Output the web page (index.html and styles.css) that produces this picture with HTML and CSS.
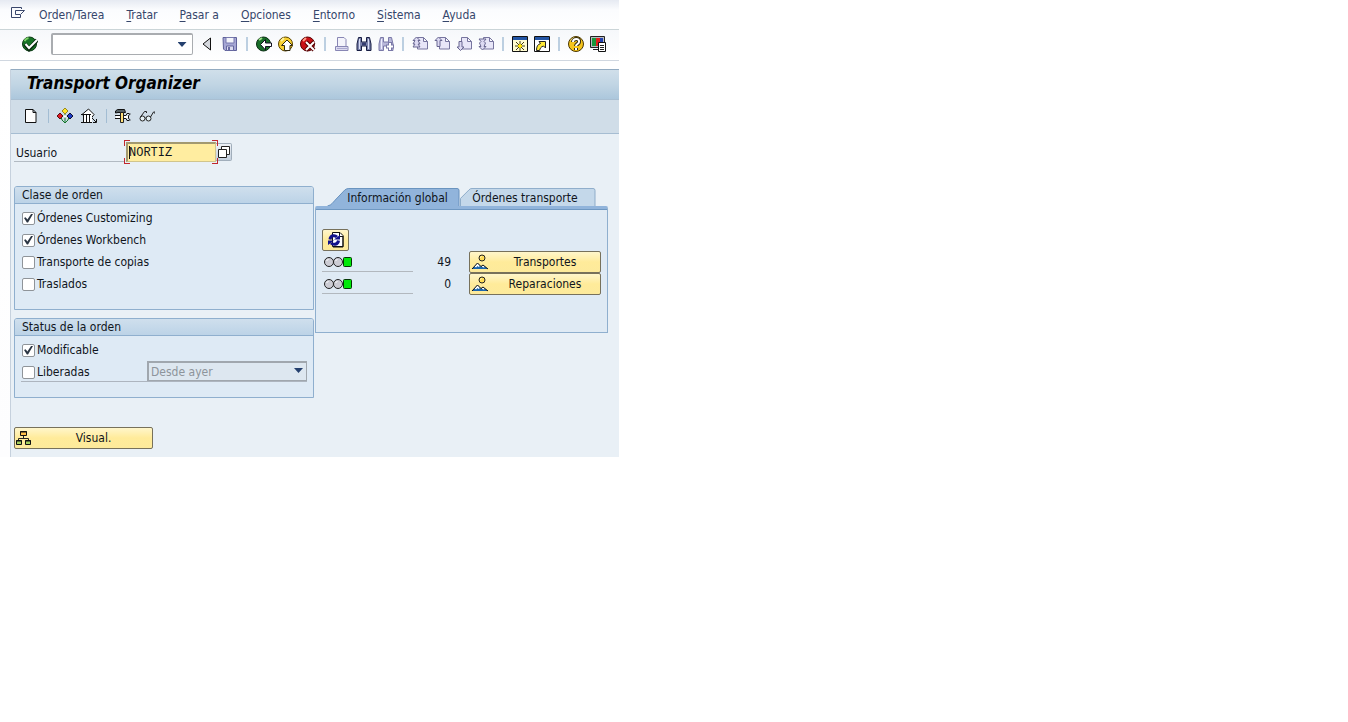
FILE: index.html
```html
<!DOCTYPE html>
<html lang="es">
<head>
<meta charset="utf-8">
<title>Transport Organizer</title>
<link rel="stylesheet" href="styles.css">
</head>
<body>
<svg class="defs" aria-hidden="true">
  <defs>
    <symbol id="doc-small" viewBox="0 0 16 16">
      <path d="M5.500 1.500h6l4 4v7.500h-10zM11.500 1.500v4h4" fill="#e8e6f8" stroke="#77759f"/>
    </symbol>
    <symbol id="lights" viewBox="0 0 28 12">
      <circle cx="5" cy="6" r="4.500" fill="#ccccd4" stroke="#222"/>
      <circle cx="14" cy="6" r="4.500" fill="#ccccd4" stroke="#222"/>
      <rect x="19.500" y="1.500" width="8" height="9" rx="1" fill="#00e808" stroke="#053505"/>
      <path d="M2.500 5l2-2M11.500 5l2-2" stroke="#fff"/>
    </symbol>
    <symbol id="scene" viewBox="0 0 18 16">
      <path d="M1 15l5.500-6L10 12.500 12 11l5 4z" fill="#1c66ae"/>
      <path d="M3.500 12.500L6.500 9l2.500 3-1.500 1-1-1-1.500 1.500zM10.500 12.500L12 11l2 2-1.500.500z" fill="#fff"/>
      <path d="M1 15l5.500-6L10 12.500 12 11l5 4" fill="none" stroke="#111"/>
      <circle cx="11" cy="4" r="3" fill="#ffdc55" stroke="#222"/>
      <path d="M9.500 3.500l1-1" stroke="#fff"/>
    </symbol>
  </defs>
</svg>
<div class="app">
  <nav class="menubar">
    <button class="menu-icon" aria-label="Menú">
      <svg width="16" height="14" viewBox="0 0 16 14" fill="none" stroke="#39466b"><path d="M11.500 3V1.500h-10v10h9V9M5.500 4.500v4M5.500 4.500h9L10.500 8.500h-5"/></svg>
    </button>
    <button>O<u>r</u>den/Tarea</button>
    <button><u>T</u>ratar</button>
    <button><u>P</u>asar a</button>
    <button><u>O</u>pciones</button>
    <button><u>E</u>ntorno</button>
    <button><u>S</u>istema</button>
    <button><u>A</u>yuda</button>
  </nav>

  <div class="toolbar">
    <button class="icon" aria-label="Continuar"><svg viewBox="0 0 16 16"><circle cx="7.500" cy="8" r="7" fill="#177326" stroke="#0a3a12"/><path d="M2.500 5a6 6 0 0 1 4-3" stroke="#7ed36a" stroke-width="2" fill="none"/><path d="M3 8l4 5 8-9" stroke="#0a2a10" stroke-width="4" fill="none"/><path d="M3.500 8l3.500 4 8-8" stroke="#fff" stroke-width="2" fill="none"/></svg></button>
    <span class="command"><input type="text" aria-label="Comando"><button class="drop" aria-label="Historial"></button></span>
    <button class="icon" aria-label="Atrás"><svg viewBox="0 0 16 16"><path d="M10.500 2v12L3 8z" fill="#d5d8de" stroke="#111"/></svg></button>
    <button class="icon" aria-label="Grabar"><svg viewBox="0 0 16 16"><path d="M1 1.500h13.500v13H3L1.500 13z" fill="#a5a6d4" stroke="#5f619a"/><path d="M4 1.500h8V7H4z" fill="#f3f4fb" stroke="#7779ae"/><path d="M4.500 10h7v4.500h-7z" fill="#dcdcf0" stroke="#6668a0"/><path d="M6 11h2v3H6z" fill="#696ba4"/></svg></button>
    <span class="sep"></span>
    <button class="icon" aria-label="Volver"><svg viewBox="0 0 16 16"><circle cx="7.500" cy="8" r="7" fill="#176d28" stroke="#092c12"/><path d="M3 4l3-2" stroke="#9de088" stroke-width="2"/><path d="M4.500 8.500l5-5V7h6v3.500h-6v3.500z" fill="#fff" stroke="#112"/></svg></button>
    <button class="icon" aria-label="Finalizar"><svg viewBox="0 0 16 16"><circle cx="7.500" cy="8" r="7" fill="#f8d030" stroke="#5a4300"/><path d="M3 5l3-3" stroke="#fff3a0" stroke-width="2"/><path d="M9 4l5.500 5.500H12v5H6.500v-5h-3z" fill="#fff" stroke="#332b10"/></svg></button>
    <button class="icon" aria-label="Cancelar"><svg viewBox="0 0 16 16"><circle cx="7.500" cy="8" r="7" fill="#ca1016" stroke="#500"/><path d="M3 5l3-3" stroke="#ff9b88" stroke-width="2"/><path d="M6 6l8 8M14 6l-8 8" stroke="#500" stroke-width="4"/><path d="M6 6l8 8M14 6l-8 8" stroke="#fff" stroke-width="2"/></svg></button>
    <span class="sep"></span>
    <button class="icon" aria-label="Imprimir"><svg viewBox="0 0 16 16"><path d="M3.500 10.500v-9H10l2 2v7" fill="#f3f3fb" stroke="#8886b4"/><path d="M1.500 10.500H14v4H1.500z" fill="#dcdaf0" stroke="#8886b4"/><path d="M3 12.500h10" stroke="#aaa8d0"/></svg></button>
    <button class="icon" aria-label="Buscar"><svg viewBox="0 0 16 16"><path d="M2.500 1.500h3V6h5V1.500h3L15 8v6.500h-4.500V10h-5v4.500H1V8z" fill="#7b83ad" stroke="#161c42"/><path d="M3.500 3v10M12.500 3v10" stroke="#d9def5"/><path d="M6 7h4v2H6z" fill="#343c70"/></svg></button>
    <button class="icon" aria-label="Seguir buscando"><svg viewBox="0 0 16 16"><path d="M2.500 1.500h3V6h5V1.500h3L15 8v6.500h-4.500V10h-5v4.500H1V8z" fill="#b9b8da" stroke="#7a79a8"/><path d="M3.500 3v10" stroke="#eef"/><path d="M12 6v9M8 10.500h8" stroke="#7a79a8" stroke-width="4"/><path d="M12 7v7M9 10.500h6" stroke="#fff" stroke-width="2"/></svg></button>
    <span class="sep"></span>
    <button class="icon" aria-label="Primera página"><svg viewBox="0 0 16 16"><use href="#doc-small"/><path d="M4.500 1L1 4.500h2L1 8h2l-2 3h7L6 8h2L6 4.500h2z" fill="#dddaf3" stroke="#696791"/></svg></button>
    <button class="icon" aria-label="Página anterior"><svg viewBox="0 0 16 16"><use href="#doc-small"/><path d="M4.500 1L1 4.500h2v6h3v-6h2z" fill="#dddaf3" stroke="#696791"/></svg></button>
    <button class="icon" aria-label="Página siguiente"><svg viewBox="0 0 16 16"><use href="#doc-small"/><path d="M4.500 14.500L1 11h2V5.500h3V11h2z" fill="#dddaf3" stroke="#696791"/></svg></button>
    <button class="icon" aria-label="Última página"><svg viewBox="0 0 16 16"><use href="#doc-small"/><path d="M4.500 14L1 10.500h2L1.500 7l1.500-1.500L1 3h7L6 5.500 7.500 7 6 10.500h2z" fill="#dddaf3" stroke="#696791"/></svg></button>
    <span class="sep"></span>
    <button class="icon" aria-label="Nuevo modo"><svg viewBox="0 0 16 16"><path d="M.500.500h15v15H.500z" fill="#fffbd0" stroke="#111"/><path d="M1 1h14v3H1z" fill="#2355a5"/><path d="M8 5v10M3 10h10M4 6l8 8M12 6l-8 8" stroke="#433c10"/><path d="M8 8v4M6 10h4" stroke="#ffe200" stroke-width="2"/></svg></button>
    <button class="icon" aria-label="Crear acceso directo"><svg viewBox="0 0 16 16"><path d="M.500.500h15v15H.500z" fill="#fff" stroke="#111"/><path d="M1 1h14v3H1z" fill="#2355a5"/><path d="M2.500 14.500c0-4 1-6 4-7L5 5.500h6.500V12l-2-2c-3 1-3 2-4 4.500z" fill="#ffe936" stroke="#222"/></svg></button>
    <span class="sep"></span>
    <button class="icon" aria-label="Ayuda"><svg viewBox="0 0 16 16"><circle cx="8" cy="8" r="7.500" fill="#f5c41c" stroke="#493600"/><path d="M3 5l3-3" stroke="#fff2a0" stroke-width="2"/><path d="M5 6c0-4 7-4 6 0 0 2-3 2-3 4M8 12v2" stroke="#332b10" stroke-width="4" fill="none"/><path d="M5 6c0-4 7-4 6 0 0 2-3 2-3 4M8 12v2" stroke="#fff" stroke-width="2" fill="none"/></svg></button>
    <button class="icon" aria-label="Ajustar layout local"><svg viewBox="0 0 16 16"><path d="M.500.500h14v11H.500zM3 13.500h6" fill="#b9bbc0" stroke="#222"/><path d="M2 2h4v8H2z" fill="#18983c"/><path d="M6 2h4v8H6z" fill="#e02020"/><path d="M10 2h3v5h-3z" fill="#2343b0"/><path d="M8.500 6.500h7v9h-7z" fill="#fff" stroke="#111"/><path d="M10 9.500h4M10 11.500h4M10 13.500h4" stroke="#222"/></svg></button>
  </div>

  <main class="workspace">
    <h1>Transport Organizer</h1>
    <div class="actions">
      <button class="icon" aria-label="Crear"><svg viewBox="0 0 16 16"><path d="M2.500 1.500H10l3 3v10H2.500zM10 1.500v3h3" fill="#fdfdfd" stroke="#111"/></svg></button>
      <span class="sep"></span>
      <button class="icon" aria-label="Liberar"><svg viewBox="0 0 16 16"><path d="M8 5v10M4 9l1 3 3 3 3-3 1-3" stroke="#12772a" fill="none"/><path d="M8 0l3 3-3 3-3-3z" fill="#ffe52a" stroke="#998a20"/><path d="M3 5l3 3-3 3-3-3z" fill="#df1824" stroke="#511"/><path d="M13 5l3 3-3 3-3-3z" fill="#1c3dc4" stroke="#113"/><path d="M6.500 8.500l1.500-2 1.500 2L8 10z" fill="#fff"/></svg></button>
      <button class="icon" aria-label="Transportar"><svg viewBox="0 0 16 16"><path d="M1 6.500L7.500 1 13 6.500l-3 4z" fill="#fff" stroke="#111"/><path d="M2 7h9v7H2z" fill="#fff"/><path d="M0 6.500h10M2.500 7v7M5.500 7v7M8.500 7v7M0 14.500h11" stroke="#111"/><path d="M11 10l4 4M15.500 11v3.500H12" stroke="#111" fill="none"/></svg></button>
      <span class="sep"></span>
      <button class="icon" aria-label="Herramientas"><svg viewBox="0 0 16 16"><path d="M.500 5V3L2.500 1.500h7l1 3H3z" fill="#566166" stroke="#111"/><path d="M5.500 4.500h3v10h-3z" fill="#ffe07a" stroke="#222"/><path d="M0 7.500h5M0 10.500h5M9 7.500h2l1-2h2.500M9 10.500h2l1 2h2.500M15.500 6l-2 1.500v3l2 1.500" stroke="#111" fill="none"/><path d="M9 9h4M1 9h4" stroke="#fff" stroke-width="2"/></svg></button>
      <button class="icon" aria-label="Visualizar"><svg viewBox="0 0 16 16" fill="none" stroke="#222"><circle cx="3.500" cy="10.500" r="2.500" fill="#e6f1f5"/><circle cx="9.500" cy="10.500" r="2.500" fill="#e6f1f5"/><path d="M1.500 9l4-5.500h2V5M11.500 9l3-5h1.500V6M6 9.500l1 1"/></svg></button>
    </div>

    <div class="content">
      <div class="user-row">
        <label for="user">Usuario</label>
        <span class="focus"><input id="user" type="text" value="NORTIZ"></span>
        <button class="match" aria-label="Ayuda para entradas"><svg width="12" height="12" viewBox="0 0 12 12"><path d="M3.500.500h8v8h-8z" fill="#fff" stroke="#222"/><path d="M.500 3.500h8v8h-8z" fill="#fff" stroke="#222"/></svg></button>
      </div>

      <div class="columns">
        <div class="left">
          <section class="group">
            <h2>Clase de orden</h2>
            <div class="rows tall">
              <label class="check"><input type="checkbox" checked>Órdenes Customizing</label>
              <label class="check"><input type="checkbox" checked>Órdenes Workbench</label>
              <label class="check"><input type="checkbox">Transporte de copias</label>
              <label class="check"><input type="checkbox">Traslados</label>
            </div>
          </section>
          <section class="group">
            <h2>Status de la orden</h2>
            <div class="rows">
              <label class="check"><input type="checkbox" checked>Modificable</label>
              <div class="released">
                <label class="check"><input type="checkbox">Liberadas</label>
                <span class="select"><select aria-label="Periodo" disabled><option>Desde ayer</option></select></span>
              </div>
            </div>
          </section>
        </div>

        <section class="tabs">
          <div class="tablist" role="tablist">
            <button class="tab active" role="tab" aria-selected="true"><svg viewBox="0 0 134 19" preserveAspectRatio="none"><path d="M.500 19C5 18 6 15 8 13L18 2Q20 .500 22 .500h109q2 0 2 2V19" fill="#91b4db" stroke="#6590bd"/></svg><span>Información global</span></button>
            <button class="tab" role="tab" aria-selected="false"><svg viewBox="0 0 136 19" preserveAspectRatio="none"><path d="M.500 19V11L9 2Q10 .500 12 .500h121q2 0 2 2V19" fill="#c4d8ea" stroke="#8cabc9"/></svg><span>Órdenes transporte</span></button>
          </div>
          <div class="panel" role="tabpanel">
            <button class="yellow refresh" aria-label="Actualizar"><svg width="18" height="16" viewBox="0 0 18 16"><path d="M5.500.500H13l3 3v11H5.500z" fill="#fff" stroke="#111"/><path d="M12.500 1v3.500H16M16 4v11H6" stroke="#111" fill="none"/><path d="M3 7.500C3.500 3 8 3 10 5M11.500 8.500C11 13 6 13 4 11" fill="none" stroke="#12128c" stroke-width="3"/><path d="M7 7.500h6V3zM7 8.500H1V13z" fill="#12128c"/></svg></button>
            <div class="stat"><span class="signal"><svg width="28" height="12"><use href="#lights"/></svg></span><span class="count">49</span><button class="yellow"><svg width="18" height="16"><use href="#scene"/></svg><span>Transportes</span></button></div>
            <div class="stat"><span class="signal"><svg width="28" height="12"><use href="#lights"/></svg></span><span class="count">0</span><button class="yellow"><svg width="18" height="16"><use href="#scene"/></svg><span>Reparaciones</span></button></div>
          </div>
        </section>
      </div>

      <button class="yellow visual"><svg width="16" height="16" viewBox="0 0 16 16"><path d="M7.500 5v3M2.500 11V8.500h10V11" stroke="#222" fill="none"/><path d="M4.500 1.500h6v4h-6z" fill="#ffc04a" stroke="#111"/><path d="M.500 10.500h5v4h-5zM9.500 10.500h5v4h-5z" fill="#a4d05e" stroke="#111"/><path d="M4 2h7M0 11h6M9 11h6" stroke="#111"/></svg><span>Visual.</span></button>
    </div>
  </main>
</div>
</body>
</html>
```
FILE: styles.css
```css
* { box-sizing: border-box; }

body {
  margin: 0;
  background: #fff;
  color: #10151c;
  font: 12px/16px "DejaVu Sans Condensed", "DejaVu Sans", sans-serif;
  font-stretch: condensed;
}

button, input, select { font: inherit; color: inherit; margin: 0; }
button { padding: 0; border: 0; background: none; }
.defs { position: absolute; width: 0; height: 0; }
.app { max-width: 619px; background: linear-gradient(#fff 70px, #fdfdfe); }

.menubar {
  display: flex;
  align-items: center;
  gap: 22px;
  height: 30px;
  padding-left: 10px;
  background: linear-gradient(#e6eaf2, #fbfcfe 10px, #fff);
  border-bottom: 1px solid #cbd5d8;
  color: #36466b;
}
.menubar button { white-space: nowrap; }
.menubar .menu-icon { height: 18px; margin-right: -9px; }
.menubar u { text-underline-offset: 2px; }

.toolbar {
  display: flex;
  align-items: center;
  gap: 6px;
  height: 31px;
  padding: 0 12px 2px 22px;
  background: linear-gradient(#f6f8fb, #fff);
  border-bottom: 1px solid #d0d7e0;
}
.icon { flex: none; width: 16px; height: 16px; }
.icon svg { display: block; width: 16px; height: 16px; }
.sep { flex: none; width: 2px; height: 14px; margin: 0 2px; background: #bccfe1; }

.command {
  display: flex;
  width: 142px;
  height: 22px;
  margin: 0 1px 0 7px;
  border: 2px solid #a9acb0;
  border-right-width: 1px;
  border-bottom-width: 1px;
  border-radius: 2px;
  background: #fff;
}
.command input { flex: 1; min-width: 0; border: 0; padding: 0 4px; background: none; }
.drop { width: 20px; }
.drop::before, .select::after {
  content: "";
  display: block;
  width: 9px;
  height: 5px;
  margin: 0 auto;
  background: #24406e;
  clip-path: polygon(0 0, 100% 0, 50% 100%);
}

.workspace {
  margin: 8px 0 0 10px;
  border-left: 1px solid #c6d1dd;
  background: #e9f0f6;
}
h1 {
  margin: 0;
  height: 31px;
  padding-left: 16px;
  border-top: 1px solid #93abc1;
  border-bottom: 1px solid #a9bfd2;
  background: linear-gradient(#d0dfea, #c1d5e4 50%, #acc7dc);
  font: italic bold 17px/26px "DejaVu Sans Condensed", "DejaVu Sans", sans-serif;
  font-stretch: condensed;
  color: #000;
}
.actions {
  display: flex;
  align-items: center;
  gap: 8px;
  height: 34px;
  padding: 0 12px 2px;
  border-bottom: 1px solid #a6bdd2;
  background: #d0dde8;
}
.actions .sep { width: 1px; margin: 0 0 0 1px; background: #a3bdd3; }

.content { padding: 6px 11px 8px 3px; }
.user-row { display: flex; align-items: center; height: 24px; }
.user-row label {
  width: 111px;
  height: 20px;
  margin-right: 1px;
  padding: 3px 2px 0;
  border-bottom: 1px solid #b2bac2;
}
.focus {
  position: relative;
  width: 90px;
  height: 20px;
  background: #ffeda0;
}
.focus::before {
  content: "";
  position: absolute;
  inset: -2px;
  background:
    linear-gradient(#c1272d, #c1272d) 0 0 / 6px 1px,
    linear-gradient(#c1272d, #c1272d) 0 0 / 1px 6px,
    linear-gradient(#c1272d, #c1272d) 100% 0 / 6px 1px,
    linear-gradient(#c1272d, #c1272d) 100% 0 / 1px 6px,
    linear-gradient(#c1272d, #c1272d) 0 100% / 6px 1px,
    linear-gradient(#c1272d, #c1272d) 0 100% / 1px 6px,
    linear-gradient(#c1272d, #c1272d) 100% 100% / 6px 1px,
    linear-gradient(#c1272d, #c1272d) 100% 100% / 1px 6px;
  background-repeat: no-repeat;
}
.focus::after {
  content: "";
  position: absolute;
  left: 3px;
  top: 4px;
  width: 1px;
  height: 13px;
  background: #111;
}
.focus input {
  display: block;
  width: 100%;
  height: 20px;
  padding: 0 1px;
  border: 2px solid #a29970;
  border-right: 1px solid #d1c58c;
  border-bottom: 1px solid #d1c58c;
  background: none;
  font: 12px/16px "Liberation Mono", monospace;
}
.match {
  display: flex;
  align-items: center;
  justify-content: center;
  width: 16px;
  height: 18px;
  border: 1px solid #a1aebb;
  border-left: 0;
  border-radius: 0 2px 2px 0;
  background: linear-gradient(#edf1f6, #c3cfdd);
}

.columns { display: flex; align-items: flex-start; gap: 1px; margin-top: 22px; }
.left { display: flex; flex: 1; flex-direction: column; gap: 8px; }
.group {
  border: 1px solid #8fafce;
  border-radius: 3px 3px 0 0;
  background: #deeaf5;
}
h2 {
  margin: 0;
  height: 17px;
  padding-left: 7px;
  border-bottom: 1px solid #8fafce;
  border-radius: 2px 2px 0 0;
  background: linear-gradient(#cfdfed, #bcd3e7);
  font-size: 12px;
  font-weight: normal;
  line-height: 16px;
}
.rows { padding: 3px 6px 15px; }
.rows.tall { padding-bottom: 14px; }
.check { display: flex; align-items: center; gap: 2px; height: 22px; padding-left: 1px; }
.check input {
  appearance: none;
  display: grid;
  place-items: center;
  width: 13px;
  height: 13px;
  border: 1px solid #8f9499;
  border-radius: 2px;
  background: #fff;
}
.check input:checked::after {
  content: "";
  width: 9px;
  height: 9px;
  background: #2b3644;
  clip-path: polygon(0 50%, 18% 42%, 38% 68%, 82% 0, 100% 5%, 45% 100%, 32% 100%);
}
.released {
  display: flex;
  justify-content: space-between;
  height: 21px;
  border-bottom: 1px solid #adb5bf;
}
.select { position: relative; width: 160px; height: 20px; }
.select select {
  appearance: none;
  width: 100%;
  height: 20px;
  padding: 0 2px;
  border: 2px solid #a0a7ae;
  border-right-width: 1px;
  border-bottom-width: 1px;
  background: #dde7f0;
  color: #8d949b;
  opacity: 1;
}
.select::after { position: absolute; right: 4px; top: 7px; }

.tabs { width: 293px; margin-top: 2px; }
.tablist { display: flex; padding-left: 12px; }
.tab { position: relative; width: 133px; height: 18px; padding: 2px 0 0 8px; line-height: 16px; }
.tab + .tab { width: 136px; padding-left: 0; padding-right: 6px; }
.tab svg { position: absolute; inset: 0; width: 100%; height: 100%; }
.tab span { position: relative; }
.panel {
  height: 127px;
  padding: 20px 6px 0;
  border: 1px solid #8fafce;
  border-top: 3px solid #91b4db;
  border-radius: 2px 2px 0 0;
  background: #dfeaf4;
  box-shadow: inset 0 1px #6f98c2;
}
.yellow {
  display: flex;
  align-items: center;
  height: 22px;
  padding: 0 1px;
  border: 1px solid #77715b;
  border-radius: 2px;
  background: linear-gradient(#fff6cb, #ffeb9a 50%, #fdea9b);
}
.yellow span { flex: 1; text-align: center; }
.refresh { width: 27px; justify-content: center; }
.stat { display: flex; align-items: center; height: 22px; }
.signal { display: flex; align-items: center; width: 91px; height: 20px; padding-left: 2px; border-bottom: 1px solid #b2b8be; }
.count { width: 38px; margin-right: 18px; text-align: right; }
.stat .yellow { width: 132px; }
.stat .yellow span { padding-left: 2px; }
.visual { width: 139px; margin-top: 29px; }
.visual span { padding-left: 4px; }
```
